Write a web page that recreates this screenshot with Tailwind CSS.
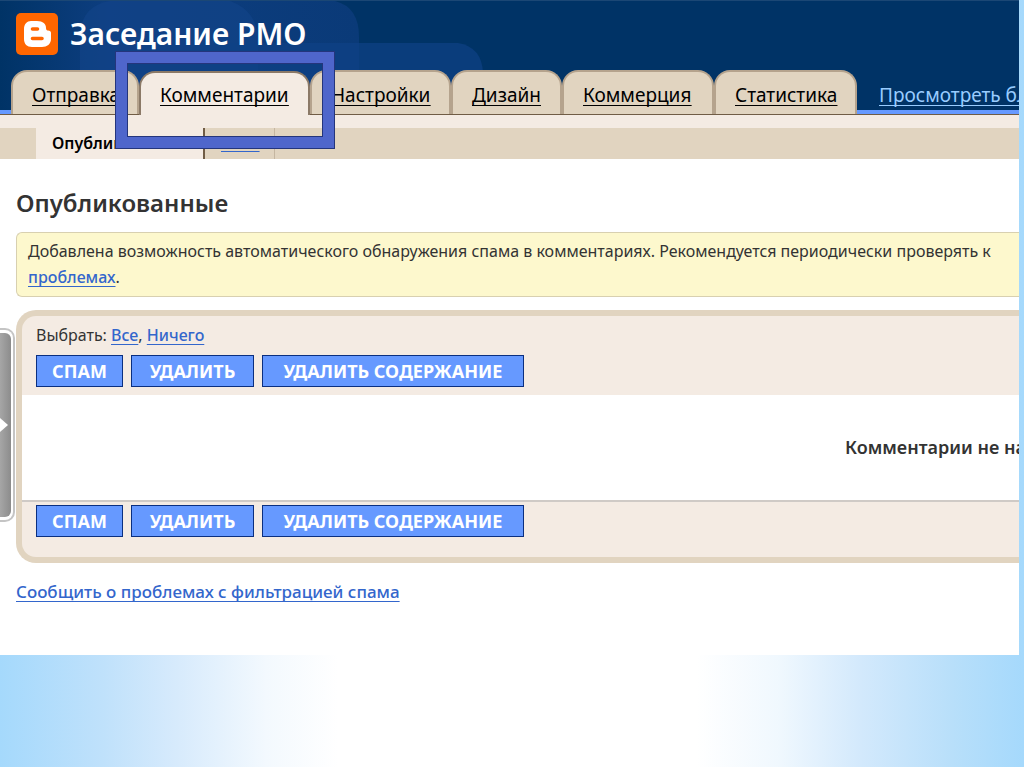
<!DOCTYPE html>
<html lang="ru">
<head>
<meta charset="utf-8">
<title>Заседание РМО</title>
<script src="https://cdn.jsdelivr.net/npm/@tailwindcss/browser@4"></script>
</head>
<body class="min-h-screen bg-[linear-gradient(to_right,#a5d9fc_0%,#bfe1fb_10%,#d6eafc_17%,#f3f9fe_26%,#ffffff_33%,#ffffff_68%,#f0f8fe_76%,#d3e9fc_84%,#b8dffa_93%,#a5d9fc_100%)] font-['Noto_Sans',sans-serif] text-[#333333] [text-decoration-skip-ink:none]">
<div class="relative mr-[5px] overflow-hidden bg-white pb-[50px]">
  <header class="relative h-[115px] overflow-hidden border-t border-[#1b4775] bg-[#003366]">
    <svg class="absolute left-0 top-0" width="500" height="114" viewBox="0 0 500 114" aria-hidden="true">
      <defs>
        <linearGradient id="glow" x1="0" x2="1"><stop offset="0" stop-color="#0d3e80" stop-opacity="0"/><stop offset=".3" stop-color="#0d3e80"/><stop offset="1" stop-color="#0a3a78"/></linearGradient>
      </defs>
      <path d="M0 0H335Q359 6 359 36V114H0Z" fill="url(#glow)"/>
      <path d="M80 114V30Q84 4 110 0H230Q258 10 258 40V114Z" fill="#124488" opacity=".65"/>
      <path d="M200 42H458Q482 46 483 72V114H200Z" fill="#0e4186" opacity=".7"/>
    </svg>
    <div class="relative flex h-full flex-col justify-between">
      <div class="flex items-center gap-3 pl-4 pt-3">
        <svg class="h-[42px] w-[42px] shrink-0" viewBox="0 0 42 42" aria-label="Blogger" role="img">
          <rect width="42" height="42" rx="5" fill="#ff6600"/>
          <path d="M15 8H21C27 8 30 11 30 15C30 17 31 17.500 32 17.500C34 17.500 35 18.500 35 20V26C35 31 31 34 26 34H16C11 34 8 31 8 26V16C8 11 11 8 15 8Z" fill="#fff"/>
          <path d="M16.500 16H21.500M16.500 25.500H26" stroke="#ff6600" stroke-width="3.600" stroke-linecap="round"/>
        </svg>
        <h1 class="whitespace-nowrap text-[30px] leading-10 font-semibold text-white">Заседание РМО</h1>
      </div>
      <nav class="flex h-11 items-end border-b border-[#705c45] whitespace-nowrap text-[19px] leading-6 text-black underline underline-offset-3" aria-label="Разделы">
        <span class="h-1 w-[11px] shrink-0 bg-[#6699ff]"></span>
        <a href="#" class="h-[44px] w-[128px] shrink-0 rounded-t-2xl border-2 border-b-0 border-[#b5a38d] bg-[#e1d4c0] pl-[19px] pt-[11px]">Отправка</a>
        <a href="#" class="-mb-px h-[44px] w-[171px] shrink-0 rounded-t-2xl border-2 border-b-0 border-[#8b7967] bg-[#f4ebe3] pl-[19px] pt-[10px]" aria-current="page">Комментарии</a>
        <a href="#" class="h-[44px] w-[141px] shrink-0 rounded-t-2xl border-2 border-b-0 border-[#b5a38d] bg-[#e1d4c0] pl-[19px] pt-[11px]">Настройки</a>
        <a href="#" class="h-[44px] w-[111px] shrink-0 rounded-t-2xl border-2 border-b-0 border-[#b5a38d] bg-[#e1d4c0] pl-[19px] pt-[11px]">Дизайн</a>
        <a href="#" class="h-[44px] w-[152px] shrink-0 rounded-t-2xl border-2 border-b-0 border-[#b5a38d] bg-[#e1d4c0] pl-[19px] pt-[11px]">Коммерция</a>
        <a href="#" class="h-[44px] w-[143px] shrink-0 rounded-t-2xl border-2 border-b-0 border-[#b5a38d] bg-[#e1d4c0] pl-[19px] pt-[11px]">Статистика</a>
        <a href="#" class="h-[44px] flex-1 border-b-4 border-[#6699ff] pl-[22px] pt-[13px] text-[#99ccff]">Просмотреть бл</a>
      </nav>
    </div>
  </header>

  <div class="h-[13px] bg-[#f4ebe3]"></div>
  <nav class="flex h-[31px] bg-[#e1d4c0] pl-9 text-[16px] leading-[30px] whitespace-nowrap" aria-label="Комментарии">
    <a href="#" class="w-[169px] border-r-2 border-[#705c45] bg-[#f4ebe3] pl-4 font-semibold text-black" aria-current="page">Опубликованные</a>
    <a href="#" class="w-[70px] border-r border-[#c5b6a1] pl-4 text-[15px] text-[#3366cc] underline underline-offset-2">Спам</a>
  </nav>

  <main class="pl-4">
    <h2 class="pt-6 text-[24px] leading-10 font-semibold">Опубликованные</h2>
    <div class="mt-[9px] rounded-l-md border border-r-0 border-[#d8d0b0] bg-[#fdf8cd] pt-[5px] pb-[6px] pl-[11px] text-[16px] leading-[26px] whitespace-nowrap">
      <p>Добавлена возможность автоматического обнаружения спама в комментариях. Рекомендуется периодически проверять к</p>
      <p><a href="#" class="font-medium text-[#3366cc] underline underline-offset-3">проблемах</a>.</p>
    </div>

    <section class="mt-[13px] overflow-hidden rounded-l-[20px] border-[6px] border-r-0 border-[#e1d4c0] bg-[#f4ebe3]">
      <div class="pb-2 pl-[14px] pt-[6px]">
        <p class="text-[16px] leading-[26px]">Выбрать: <a href="#" class="font-medium text-[#3366cc] underline underline-offset-3">Все</a>, <a href="#" class="font-medium text-[#3366cc] underline underline-offset-3">Ничего</a></p>
        <div class="mt-[7px] flex gap-2 text-[18px] font-bold text-white">
          <button type="button" class="h-8 w-[87px] border border-[#0a2f80] bg-[#6699ff] leading-7">СПАМ</button>
          <button type="button" class="h-8 w-[123px] border border-[#0a2f80] bg-[#6699ff] leading-7">УДАЛИТЬ</button>
          <button type="button" class="h-8 w-[262px] border border-[#0a2f80] bg-[#6699ff] leading-7">УДАЛИТЬ СОДЕРЖАНИЕ</button>
        </div>
      </div>
      <p class="flex h-[107px] items-center justify-end border-b-2 border-[#cfcac6] bg-white text-[18px] font-semibold whitespace-nowrap"><span class="w-[174px]">Комментарии не на</span></p>
      <div class="flex gap-2 pb-5 pl-[14px] pt-[3px] text-[18px] font-bold text-white">
        <button type="button" class="h-8 w-[87px] border border-[#0a2f80] bg-[#6699ff] leading-7">СПАМ</button>
        <button type="button" class="h-8 w-[123px] border border-[#0a2f80] bg-[#6699ff] leading-7">УДАЛИТЬ</button>
        <button type="button" class="h-8 w-[262px] border border-[#0a2f80] bg-[#6699ff] leading-7">УДАЛИТЬ СОДЕРЖАНИЕ</button>
      </div>
    </section>

    <p class="mt-4 text-[17px] leading-[26px]"><a href="#" class="font-medium text-[#3366cc] underline underline-offset-3">Сообщить о проблемах с фильтрацией спама</a></p>
  </main>

  <button type="button" aria-label="Открыть панель" class="absolute left-0 top-[328px] flex h-[194px] w-[15px] rounded-r-[10px] border-2 border-l-0 border-[#c4c4c4] bg-white py-[3px] pr-[2px]">
    <span class="flex h-full w-full items-center rounded-r-md bg-linear-to-r from-[#a6a6a6] to-[#8c8c8c]">
      <svg width="8" height="14" viewBox="0 0 8 14" aria-hidden="true"><path d="M0 0L8 7L0 14Z" fill="#fff"/></svg>
    </span>
  </button>
  <div class="absolute left-[115px] top-[51px] h-[98px] w-[220px] border border-[#24357c] bg-transparent">
    <div class="h-full border-[11px] border-[#4f66cb]"><div class="h-full border border-[#24357c]"></div></div>
  </div>
</div>
</body>
</html>
